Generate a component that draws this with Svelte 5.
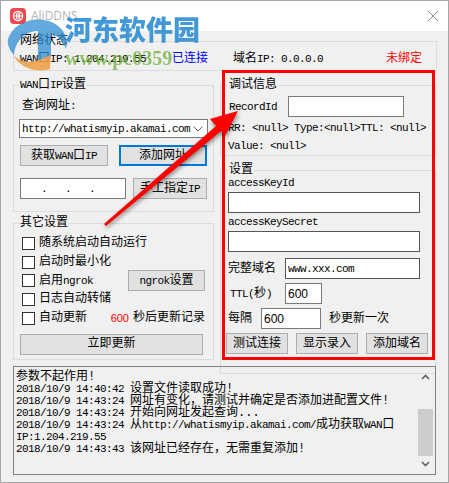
<script>
	const checks = ['随系统启动自动运行', '启动时最小化', '启用', '日志自动转储', '自动更新'];
	const log = [
		{ time: '', msg: '参数不起作用!' },
		{ time: '2018/10/9 14:40:42 ', msg: '设置文件读取成功!' },
		{ time: '2018/10/9 14:43:24 ', msg: '网址有变化\uFF0C请测试并确定是否添加进配置文件!' },
		{ time: '2018/10/9 14:43:24 ', msg: '开始向网址发起查询...' }
	];
</script>

<div class="window">
	<header class="titlebar">
		<svg class="appicon" width="16" height="16" viewBox="0 0 16 16">
			<rect width="16" height="16" rx="4" fill="#f0484e" />
			<circle cx="8" cy="8" r="4.6" fill="none" stroke="#fff" stroke-width="1.3" />
			<path d="M8 3.4V12.6M3.4 8H12.6M5.8 4.2Q8 8 5.8 11.8M10.2 4.2Q8 8 10.2 11.8" fill="none" stroke="#fff" />
		</svg>
		<span class="apptitle">AliDDNS</span>
		<svg class="close" width="10" height="10" viewBox="0 0 10 10">
			<path d="M0 0L10 10M10 0L0 10" stroke="#8a8a8a" stroke-width="1" fill="none" />
		</svg>
	</header>

	<main class="content">
		<fieldset class="status">
			<legend>网络状态</legend>
			<div class="statusrow">
				<span class="wanip"><span class="l">WAN</span>口<span class="l">IP: 1.204.219.55</span></span>
				<span class="blue">已连接</span>
				<span class="domainip">域名<span class="l">IP: 0.0.0.0</span></span>
				<span class="red">未绑定</span>
			</div>
		</fieldset>

		<div class="columns">
			<div class="col">
				<fieldset class="wan">
					<legend><span class="l">WAN</span>口<span class="l">IP</span>设置</legend>
					<div class="query">查询网址<span class="l">:</span></div>
					<div class="combo">
						<span class="l">http://whatismyip.akamai.com</span>
						<svg width="10" height="6" viewBox="0 0 10 6"><path d="M0.5 0.5L5 5L9.5 0.5" fill="none" stroke="#666" /></svg>
					</div>
					<div class="btnrow">
						<button class="b88">获取<span class="l">WAN</span>口<span class="l">IP</span></button>
						<button class="b88 focused">添加网址</button>
					</div>
					<div class="iprow">
						<div class="ipbox"><span class="l">.</span><span class="l">.</span><span class="l">.</span></div>
						<button class="manual">手工指定<span class="l">IP</span></button>
					</div>
				</fieldset>

				<fieldset class="other">
					<legend>其它设置</legend>
					{#each checks as c, i}
						<div class="checkrow">
							<span class="box"></span>
							<span>{c}{#if i === 2}<span class="l">ngrok</span>{/if}</span>
							{#if i === 2}
								<button class="ngrok"><span class="l">ngrok</span>设置</button>
							{/if}
							{#if i === 4}
								<span class="count">600</span>
								<span class="after">秒后更新记录</span>
							{/if}
						</div>
					{/each}
					<button class="now">立即更新</button>
				</fieldset>
			</div>

			<div class="col">
				<fieldset class="debug">
					<legend>调试信息</legend>
					<div class="recordrow">
						<span class="l">RecordId</span>
						<input class="recordinput" />
					</div>
					<div class="nullrow"><span class="l">RR: &lt;null&gt; Type:&lt;null&gt;TTL: &lt;null&gt;</span></div>
					<div class="nullrow second"><span class="l">Value: &lt;null&gt;</span></div>
				</fieldset>

				<fieldset class="settings">
					<legend>设置</legend>
					<div class="fieldlabel first"><span class="l">accessKeyId</span></div>
					<input class="wide" />
					<div class="fieldlabel"><span class="l">accessKeySecret</span></div>
					<input class="wide" />
					<div class="domainrow">
						<span>完整域名</span>
						<input class="domaininput" value="www.xxx.com" />
					</div>
					<div class="ttlrow">
						<span class="ttl"><span class="l">TTL(</span>秒<span class="l">)</span></span>
						<input class="ttlinput num" value="600" />
					</div>
					<div class="everyrow">
						<span>每隔</span>
						<input class="everyinput num" value="600" />
						<span>秒更新一次</span>
					</div>
					<div class="actions">
						<button>测试连接</button>
						<button>显示录入</button>
						<button>添加域名</button>
					</div>
				</fieldset>
			</div>
		</div>

		<section class="logbox">
			<div class="lines">
				{#each log as row}
					<div><span class="l">{row.time}</span>{row.msg}</div>
				{/each}
				<div><span class="l">{'2018/10/9 14:43:24 '}</span>从<span class="l">http://whatismyip.akamai.com/</span>成功获取<span class="l">WAN</span>口</div>
				<div><span class="l">IP:1.204.219.55</span></div>
				<div><span class="l">{'2018/10/9 14:43:43 '}</span>该网址已经存在{'\uFF0C'}无需重复添加!</div>
			</div>
			<div class="scrollbar">
				<svg width="9" height="6" viewBox="0 0 9 6"><path d="M1 5L4.5 1.5L8 5" fill="none" stroke="#606060" stroke-width="1.6" /></svg>
				<div class="track"><div class="thumb"></div></div>
				<svg width="9" height="6" viewBox="0 0 9 6"><path d="M1 1L4.5 4.5L8 1" fill="none" stroke="#606060" stroke-width="1.6" /></svg>
			</div>
		</section>
	</main>

	<!-- annotation + watermark sit on top of the screenshot -->
	<div class="redbox"></div>
	<svg class="arrow" width="449" height="483" viewBox="0 0 449 483">
		<path d="M106 226L221 131L225 136L238 111L210 119L216 126L104 224Z" fill="#ff0000" />
	</svg>
	<svg class="wmlogo" width="70" height="60" viewBox="0 0 70 60">
		<path d="M3 22C8 6 28 -1 44 4C56 8 64 18 61 32C58 24 52 18 46 16L46 40L33 44L33 14C20 14 10 24 9 38C5 34 2 28 3 22Z" fill="#2f8fd3" fill-opacity="0.75" />
		<path d="M8 38C16 46 28 46 36 42L46 38L45 52C32 56 16 52 8 38Z" fill="#f0a04a" fill-opacity="0.9" />
	</svg>
	<div class="wmtitle">河东软件园</div>
	<div class="wmurl">www.pc0359</div>
</div>

<style>
	:global(body) {
		margin: 0;
	}

	.window {
		position: relative;
		width: 449px;
		height: 483px;
		box-sizing: border-box;
		overflow: hidden;
		border: 1px solid #a6a6a6;
		background: #f0f0f0;
		color: #000;
		font-family: 'Liberation Mono', 'Noto Sans CJK SC', monospace;
		font-size: 12px;
		line-height: 12px;
	}

	.l {
		font-size: 11px;
		letter-spacing: -0.6px;
	}

	.titlebar {
		display: flex;
		align-items: center;
		height: 30px;
		padding: 0 10px 0 9px;
		background: #fff;
	}

	.apptitle {
		margin-left: 5px;
		color: #b4b4b4;
		font-family: 'Open Sans', sans-serif;
		font-size: 12px;
	}

	.close {
		margin-left: auto;
	}

	.content {
		padding: 4px 12px 0;
	}

	fieldset {
		margin: 0;
		padding: 0;
		min-width: 0;
		box-sizing: border-box;
		border: 1px solid #dcdcdc;
	}

	legend {
		margin-left: 0;
		padding: 0 1px;
		line-height: 12px;
		white-space: nowrap;
	}

	button {
		height: 21px;
		padding: 0;
		box-sizing: border-box;
		border: 1px solid #adadad;
		background: #e1e1e1;
		color: #000;
		font: inherit;
		line-height: 12px;
		white-space: nowrap;
	}

	input {
		display: block;
		flex: none;
		box-sizing: border-box;
		height: 21px;
		padding: 0 2px;
		border: 1px solid #7a7a7a;
		border-radius: 0;
		background: #fff;
		outline: none;
		font-family: 'Liberation Mono', monospace;
		font-size: 11px;
		letter-spacing: -0.6px;
	}

	input.num {
		font-family: 'Liberation Sans', sans-serif;
		font-size: 12px;
		letter-spacing: 0;
	}

	.status {
		height: 36px;
		margin-right: -1px;
		padding: 6px 0 0 5px;
	}

	.statusrow {
		display: flex;
		margin-left: 1px;
	}

	.wanip {
		width: 152px;
	}

	.blue {
		width: 61px;
		color: #0000ff;
	}

	.domainip {
		width: 153px;
	}

	.red {
		color: #ff0000;
	}

	.columns {
		display: grid;
		grid-template-columns: 201px 216px;
		column-gap: 6px;
		margin-top: 8px;
	}

	.wan {
		height: 133px;
		padding: 9px 5px 0;
	}

	.query {
		padding-left: 3px;
	}

	.combo {
		display: flex;
		align-items: center;
		justify-content: space-between;
		box-sizing: border-box;
		height: 19px;
		margin-top: 7px;
		padding: 0 4px 0 2px;
		border: 1px solid #7a7a7a;
		background: #fff;
	}

	.btnrow {
		display: flex;
		gap: 11px;
		margin: 7px 0 0 1px;
	}

	.b88 {
		width: 88px;
	}

	.focused {
		border: 2px solid #0078d7;
	}

	.iprow {
		display: flex;
		gap: 7px;
		margin: 12px 0 0 1px;
	}

	.ipbox {
		display: flex;
		gap: 18px;
		align-items: center;
		box-sizing: border-box;
		width: 106px;
		height: 21px;
		padding: 0 0 0 20px;
		border: 1px solid #7a7a7a;
		background: #fff;
	}

	.manual {
		width: 74px;
	}

	.other {
		height: 143px;
		margin-top: 5px;
		padding: 5px 5px 0 5px;
	}

	.checkrow {
		display: flex;
		align-items: center;
		gap: 4px;
		height: 18.7px;
		padding-left: 3px;
	}

	.box {
		flex: none;
		box-sizing: border-box;
		width: 13px;
		height: 13px;
		border: 1px solid #333;
		background: #fff;
	}

	.ngrok {
		width: 77px;
		margin-left: auto;
		margin-right: 3px;
	}

	.count {
		margin-left: auto;
		color: #ff0000;
		font-family: 'Liberation Sans', sans-serif;
		font-size: 11px;
	}

	.after {
		margin-right: 3px;
	}

	.now {
		display: block;
		width: 183px;
		margin: 6.5px 0 0 1px;
	}

	.debug {
		height: 77px;
		padding: 0 0 0 7px;
	}

	.recordrow {
		display: flex;
		align-items: center;
		gap: 11px;
		height: 21px;
		margin: 5px 0 0 1px;
	}

	.recordinput {
		width: 116px;
	}

	.nullrow {
		margin-top: 5px;
	}

	.nullrow.second {
		margin-top: 6px;
	}

	.settings {
		height: 210px;
		margin-top: 8px;
		padding: 0 0 0 7px;
	}

	.fieldlabel {
		margin-top: 3px;
		height: 12px;
	}

	.fieldlabel.first {
		margin-top: 1px;
	}

	.settings input.wide {
		width: 192px;
		margin-top: 3px;
		border-color: #555;
	}

	.domainrow {
		display: flex;
		align-items: center;
		gap: 9px;
		margin-top: 6px;
	}

	.domaininput {
		width: 135px;
		border-color: #555;
	}

	.ttlrow {
		display: flex;
		align-items: center;
		margin-top: 4px;
	}

	.ttl {
		width: 57px;
		padding-left: 2px;
		box-sizing: border-box;
	}

	.ttlinput {
		width: 37px;
	}

	.everyrow {
		display: flex;
		align-items: center;
		gap: 9px;
		margin-top: 4px;
	}

	.everyinput {
		width: 60px;
		margin-right: -1px;
	}

	.actions {
		display: flex;
		gap: 8px;
		margin: 4px 0 0 -2px;
	}

	.actions button {
		width: 62px;
	}

	.logbox {
		position: relative;
		display: flex;
		justify-content: space-between;
		box-sizing: border-box;
		width: 423px;
		height: 109px;
		margin-top: -8px;
		padding: 4px 2px 0 2px;
		border: 1px solid #828282;
	}

	.lines {
		width: 400px;
	}

	.scrollbar {
		display: flex;
		flex-direction: column;
		align-items: center;
		justify-content: space-between;
		width: 15px;
		margin-top: -4px;
		padding: 7px 0 7px;
		box-sizing: border-box;
	}

	.track {
		flex: 1;
		align-self: stretch;
		padding-top: 29px;
	}

	.thumb {
		height: 47px;
		background: #cdcdcd;
	}

	.redbox {
		position: absolute;
		left: 221px;
		top: 69px;
		width: 213px;
		height: 290px;
		box-sizing: border-box;
		border: 3px solid #ff0000;
	}

	.arrow {
		position: absolute;
		left: -1px;
		top: -1px;
		filter: drop-shadow(1px 2px 2px rgba(0, 0, 0, 0.45));
	}

	.wmlogo {
		position: absolute;
		left: 4px;
		top: 16px;
	}

	.wmtitle {
		position: absolute;
		left: 64px;
		top: 11px;
		color: #2f8fd3;
		font-family: 'Noto Sans CJK SC', sans-serif;
		font-size: 27px;
		font-weight: 900;
		line-height: 34px;
		opacity: 0.9;
	}

	.wmurl {
		position: absolute;
		left: 64px;
		top: 46px;
		color: #6fb03a;
		font-family: 'Liberation Serif', serif;
		font-size: 20px;
		font-weight: 700;
		line-height: 22px;
		opacity: 0.75;
	}
</style>
